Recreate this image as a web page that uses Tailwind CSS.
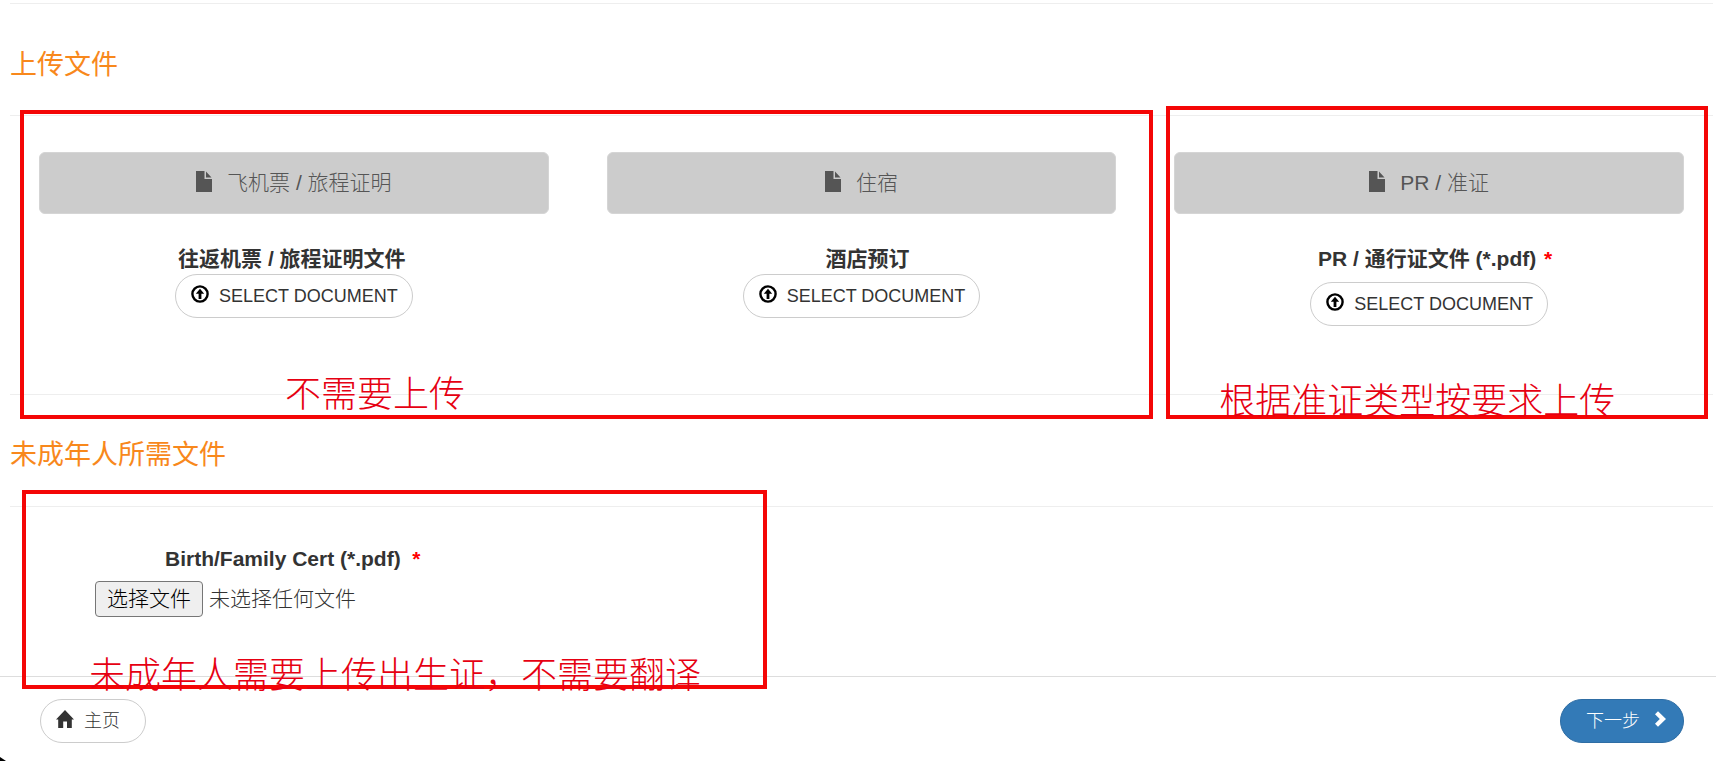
<!DOCTYPE html>
<html lang="zh-CN">
  <head>
    <meta charset="UTF-8" />
    <meta name="viewport" content="width=device-width, initial-scale=1.0" />
    <script src="https://cdn.jsdelivr.net/npm/@tailwindcss/browser@4"></script>
    <title>上传文件</title>
  </head>
  <body
    class="relative min-h-screen overflow-x-hidden bg-white font-['Liberation_Sans','Noto_Sans_CJK_SC',sans-serif] text-[21px] leading-[30px] font-light text-[#333]"
  >
    <!-- shared icons -->
    <svg class="hidden">
      <symbol id="icon-file" viewBox="0 0 16 21">
        <path d="M0 0h8.500v8H16v13H0z M10 0.500L15.500 6.500H10z" />
      </symbol>
      <symbol id="icon-upload" viewBox="0 0 18 18">
        <circle cx="9" cy="9" r="7.600" fill="none" stroke="currentColor" stroke-width="2.400" />
        <path d="M9 3.800L13.200 8.800H10.400V14H7.600V8.800H4.800z" />
      </symbol>
      <symbol id="icon-home" viewBox="0 0 18 18">
        <path d="M9 0L18 9.500H15.800V18H11V11.500H7.200V18H2.200V9.500H0z" />
      </symbol>
      <symbol id="icon-next" viewBox="0 0 13 16">
        <path d="M1 3.200L4 0.200L12 8L4 15.800L1 12.800L5.800 8z" />
      </symbol>
    </svg>

    <main class="pt-[3px] pr-[3px] pl-[10px]">
      <hr class="border-[#eee]" />
      <h2 class="pt-[47px] pb-[35px] text-[27px] leading-[29px] font-normal text-[#f8881c]">上传文件</h2>
      <hr class="border-[#eee]" />

      <section class="grid grid-cols-3">
        <div class="relative col-span-2 grid grid-cols-2">
          <div class="px-[29px] pt-9 pb-[76px] text-center">
            <div class="flex h-[62px] items-center justify-center gap-[15px] rounded-md border border-[#d5d5d5] bg-[#ccc] text-[#555]">
              <svg class="mb-1 h-[21px] w-4 fill-current"><use href="#icon-file" /></svg>
              <span>飞机票 / 旅程证明</span>
            </div>
            <label for="ticket" class="mt-[30px] block pr-1 font-bold">往返机票 / 旅程证明文件</label>
            <button
              type="button"
              data-file="ticket"
              class="inline-flex h-11 items-center gap-[10px] rounded-full border border-[#ccc] bg-white pr-[14px] pl-[15px] text-lg"
            >
              <svg class="mb-1 size-[18px] fill-current text-black"><use href="#icon-upload" /></svg>
              SELECT DOCUMENT
            </button>
            <input type="file" id="ticket" class="hidden" />
          </div>
          <div class="px-[29px] pt-9 pb-[76px] text-center">
            <div class="flex h-[62px] items-center justify-center gap-[15px] rounded-md border border-[#d5d5d5] bg-[#ccc] text-[#555]">
              <svg class="mb-1 h-[21px] w-4 fill-current"><use href="#icon-file" /></svg>
              <span>住宿</span>
            </div>
            <label for="hotel" class="mt-[30px] block pl-3 font-bold">酒店预订</label>
            <button
              type="button"
              data-file="hotel"
              class="inline-flex h-11 items-center gap-[10px] rounded-full border border-[#ccc] bg-white pr-[14px] pl-[15px] text-lg"
            >
              <svg class="mb-1 size-[18px] fill-current text-black"><use href="#icon-upload" /></svg>
              SELECT DOCUMENT
            </button>
            <input type="file" id="hotel" class="hidden" />
          </div>
          <!-- note -->
          <div class="pointer-events-none absolute top-[-6px] right-[-8px] bottom-[-25px] left-[10px] border-4 border-[#f40606]">
            <p class="absolute bottom-0 left-[261px] text-4xl leading-[40px] whitespace-nowrap text-[#e60012]">不需要上传</p>
          </div>
        </div>

        <div class="relative px-[29px] pt-9 text-center">
          <div class="flex h-[62px] items-center justify-center gap-[15px] rounded-md border border-[#d5d5d5] bg-[#ccc] text-[#555]">
            <svg class="mb-1 h-[21px] w-4 fill-current"><use href="#icon-file" /></svg>
            <span>PR / 准证</span>
          </div>
          <label for="pass" class="mt-[30px] mb-2 block pl-3 font-bold">
            PR / 通行证文件 (*.pdf) <span class="ml-[2px] text-[#f00]">*</span>
          </label>
          <button
            type="button"
            data-file="pass"
            class="inline-flex h-11 items-center gap-[10px] rounded-full border border-[#ccc] bg-white pr-[14px] pl-[15px] text-lg"
          >
            <svg class="mb-1 size-[18px] fill-current text-black"><use href="#icon-upload" /></svg>
            SELECT DOCUMENT
          </button>
          <input type="file" id="pass" class="hidden" />
          <!-- note -->
          <div class="pointer-events-none absolute top-[-10px] right-[5px] bottom-[-25px] left-[21px] border-4 border-[#f40606]">
            <p class="absolute bottom-[-7px] left-[49px] text-4xl leading-[40px] whitespace-nowrap text-[#e60012]">根据准证类型按要求上传</p>
          </div>
        </div>
      </section>

      <hr class="border-[#eee]" />
      <h2 class="pt-[46px] pb-[36px] text-[27px] leading-[29px] font-normal text-[#f8881c]">未成年人所需文件</h2>
      <hr class="border-[#eee]" />

      <section class="relative pt-[37px] pb-[59px] pl-[85px]">
        <label for="birth" class="block pl-[70px] font-bold">
          Birth/Family Cert (*.pdf)&nbsp; <span class="text-[#f00]">*</span>
        </label>
        <div class="mt-[7px] flex items-center gap-[6px]">
          <button
            type="button"
            data-file="birth"
            class="h-9 rounded border border-[#767676] bg-[#efefef] px-[11px] text-black"
          >选择文件</button>
          <span id="birth-name">未选择任何文件</span>
          <input type="file" id="birth" accept=".pdf" class="hidden" />
        </div>
        <!-- note -->
        <div class="pointer-events-none absolute top-[-17px] bottom-[-13px] left-[12px] w-[745px] border-4 border-[#f40606]">
          <p class="absolute bottom-[-11px] left-[63px] text-4xl leading-[40px] whitespace-nowrap text-[#e60012]">未成年人需要上传出生证，不需要翻译</p>
        </div>
      </section>
    </main>

    <footer class="flex justify-between border-t border-[#ddd] pt-[22px] pr-8 pb-4 pl-10 text-lg">
      <button type="button" class="flex h-11 items-center gap-[10px] rounded-full border border-[#ccc] bg-white pr-[25px] pl-[15px]">
        <svg class="mb-1 size-[18px] fill-current"><use href="#icon-home" /></svg>
        主页
      </button>
      <button type="button" class="flex h-11 items-center gap-[14px] rounded-full border border-[#2e6da4] bg-[#337ab7] pr-4 pl-[25px] text-white">
        下一步
        <svg class="mb-1 h-4 w-[13px] fill-current"><use href="#icon-next" /></svg>
      </button>
    </footer>

    <svg class="absolute bottom-0 left-0 h-1 w-[6px]" viewBox="0 0 6 4"><path d="M0 0L6 4H0z" /></svg>

    <script>
      document.querySelectorAll("[data-file]").forEach(function (btn) {
        btn.addEventListener("click", function () {
          document.getElementById(btn.dataset.file).click();
        });
      });

      document.getElementById("birth").addEventListener("change", function (e) {
        var file = e.target.files[0];
        document.getElementById("birth-name").textContent = file ? file.name : "未选择任何文件";
      });
    </script>
  </body>
</html>
